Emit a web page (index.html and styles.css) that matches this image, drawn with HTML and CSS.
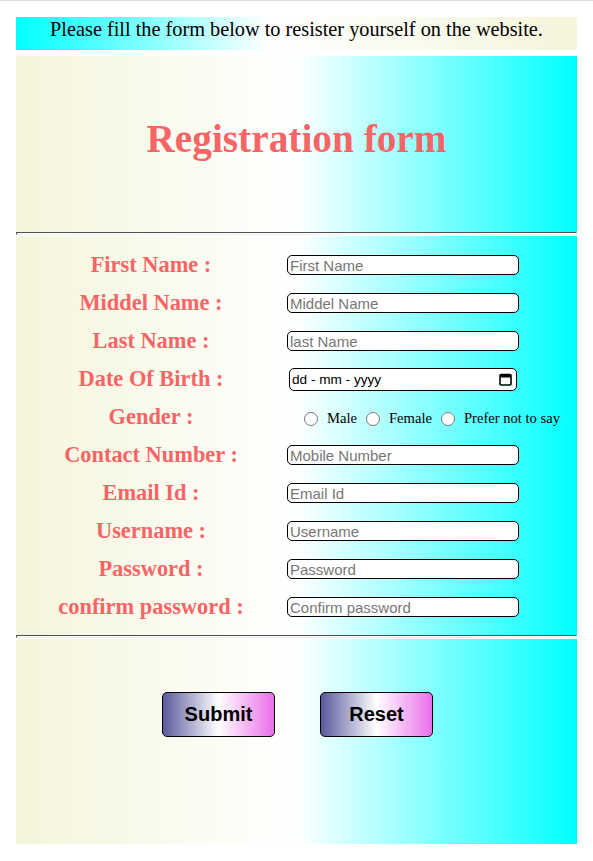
FILE: index.html
```html
<!DOCTYPE html>
<html lang="en-GB">
<head>
<meta charset="utf-8">
<title>Registration form</title>
<link rel="stylesheet" href="styles.css">
</head>
<body>
<div class="page">
  <p class="notice">Please fill the form below to resister yourself on the website.</p>
  <form class="reg">
    <div class="head">
      <h1 class="title">Registration form</h1>
    </div>
    <hr class="rule">
    <div class="fields">
      <label class="lbl" for="fn">First Name :</label>
      <div class="cell"><input class="txt" id="fn" type="text" placeholder="First Name"></div>
      <label class="lbl" for="mn">Middel Name :</label>
      <div class="cell"><input class="txt" id="mn" type="text" placeholder="Middel Name"></div>
      <label class="lbl" for="ln">Last Name :</label>
      <div class="cell"><input class="txt" id="ln" type="text" placeholder="last Name"></div>
      <label class="lbl" for="dob">Date Of Birth :</label>
      <div class="cell">
        <div class="date">
          <input class="date-in" id="dob" type="text" placeholder="dd - mm - yyyy">
          <svg class="cal" width="13" height="13" viewBox="0 0 13 13" aria-hidden="true">
            <rect x="1" y="1.5" width="11" height="10.5" rx="1" fill="none" stroke="#000" stroke-width="1.6"/>
            <rect x="1" y="1.5" width="11" height="3" fill="#000"/>
          </svg>
        </div>
      </div>
      <span class="lbl">Gender :</span>
      <div class="cell radios">
        <input class="rad" type="radio" name="g" id="gm"><label for="gm">Male</label>
        <input class="rad" type="radio" name="g" id="gf"><label for="gf">Female</label>
        <input class="rad" type="radio" name="g" id="gp"><label for="gp">Prefer not to say</label>
      </div>
      <label class="lbl" for="cn">Contact Number :</label>
      <div class="cell"><input class="txt" id="cn" type="tel" placeholder="Mobile Number"></div>
      <label class="lbl" for="em">Email Id :</label>
      <div class="cell"><input class="txt" id="em" type="email" placeholder="Email Id"></div>
      <label class="lbl" for="un">Username :</label>
      <div class="cell"><input class="txt" id="un" type="text" placeholder="Username"></div>
      <label class="lbl" for="pw">Password :</label>
      <div class="cell"><input class="txt" id="pw" type="password" placeholder="Password"></div>
      <label class="lbl" for="cp">confirm password :</label>
      <div class="cell"><input class="txt" id="cp" type="password" placeholder="Confirm password"></div>
    </div>
    <hr class="rule">
    <div class="actions">
      <button class="btn" type="submit">Submit</button>
      <button class="btn" type="reset">Reset</button>
    </div>
  </form>
</div>
</body>
</html>
```
FILE: styles.css
```css
html {
  background: #fff;
}
body {
  margin: 0;
  border-top: 1px solid #dedede;
  font-family: "Liberation Serif", "Times New Roman", serif;
}
.page {
  padding: 16px 16px 17px;
}
.notice {
  margin: 0 0 6px;
  height: 33px;
  box-sizing: border-box;
  padding-top: 0;
  text-align: center;
  font-size: 20.3px;
  line-height: 24px;
  color: #000;
  background: linear-gradient(to right, #00ffff, #ffffff 45%, #f5f5dc);
}
.reg {
  margin: 0;
}
.head,
.fields,
.actions {
  background: linear-gradient(to right, #f5f5dc, #ffffff 50%, #00ffff);
}
.head {
  height: 176px;
  display: flex;
  align-items: center;
  justify-content: center;
}
.title {
  margin: 0 0 10px;
  font-size: 39.3px;
  font-weight: bold;
  color: #f56565;
}
.rule {
  margin: 0 0 1px;
  height: 1px;
  border: 1px inset #ededed;
  border-top-color: #a3a3a3;
  border-left-color: #a3a3a3;
}
.fields {
  display: grid;
  grid-template-columns: 270px 1fr;
  grid-auto-rows: 38px;
  padding: 10px 0 9px;
}
.lbl {
  display: flex;
  align-items: center;
  justify-content: center;
  font-size: 22.4px;
  font-weight: bold;
  color: #f56565;
}
.cell {
  display: flex;
  align-items: center;
  padding-left: 1px;
}
.txt {
  width: 232px;
  height: 20px;
  box-sizing: border-box;
  margin: 0;
  padding: 0 2px;
  border: 1px solid #000;
  border-radius: 5px;
  background: #fff;
  font-family: "Liberation Sans", Arial, sans-serif;
  font-size: 15px;
  color: #000;
}
.txt::placeholder {
  color: #777;
}
.date {
  width: 228px;
  height: 23px;
  box-sizing: border-box;
  margin-left: 2px;
  padding: 0 4px 0 2px;
  border: 1px solid #000;
  border-radius: 5px;
  background: #fff;
  display: flex;
  align-items: center;
}
.date-in {
  flex: 1;
  min-width: 0;
  margin: 0;
  padding: 0;
  border: 0;
  background: transparent;
  font-family: "Liberation Sans", Arial, sans-serif;
  font-size: 13.6px;
  color: #000;
  outline: none;
}
.date-in::placeholder {
  color: #000;
  opacity: 1;
}
.cal {
  flex: none;
}
.radios {
  padding-left: 13px;
  font-size: 14.6px;
  padding-top: 3px;
}
.rad {
  width: 14px;
  height: 14px;
  margin: 0 9px 0 5px;
}
.radios label {
  margin-right: 4px;
}
.actions {
  height: 205px;
  box-sizing: border-box;
  padding: 53px 0 0 2px;
  display: flex;
  justify-content: center;
  align-items: flex-start;
  gap: 45px;
}
.btn {
  width: 113px;
  height: 45px;
  margin: 0;
  padding: 0;
  border: 1px solid #000;
  border-radius: 5px;
  background: linear-gradient(to right, #5a5a9e, #ffffff 50%, #ea6fea);
  font-family: "Liberation Sans", Arial, sans-serif;
  font-size: 20px;
  font-weight: bold;
  color: #000;
}
```
